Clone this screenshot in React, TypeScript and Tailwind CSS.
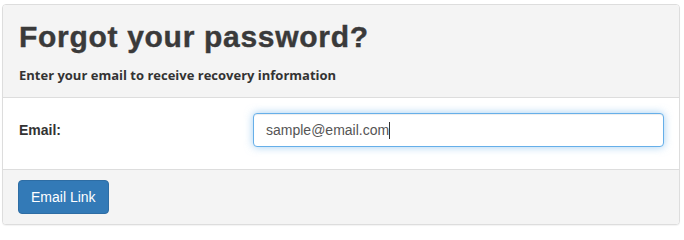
import React from "react";

export default function App() {
  return (
    <div className="w-[684px] h-[228px] bg-white pt-[4px] pl-[2px]">
      <div className="w-[678px] border border-[#dddddd] rounded-[4px] bg-white overflow-hidden shadow-[0_1px_1px_rgba(0,0,0,0.05)]">
        <div className="h-[93px] bg-[#f4f4f4] border-b border-[#dddddd] pl-[16px] pt-[15px]">
          <h1 className="font-['Liberation_Sans',Arial,sans-serif] font-bold text-[30px] leading-[33px] tracking-[0.7px] text-[#3a3a3a] m-0 [-webkit-text-stroke:0.4px_#3a3a3a]">
            Forgot your password?
          </h1>
          <p className="mt-[13px] font-['Open_Sans',sans-serif] font-bold text-[13px] leading-[18px] text-[#333333]">
            Enter your email to receive recovery information
          </p>
        </div>
        <div className="h-[72px] bg-white flex items-start pt-[15px] pl-[16px] pr-[15px] border-b border-[#dddddd]">
          <label className="w-[234px] h-[34px] flex items-center font-['Liberation_Sans',Arial,sans-serif] font-bold text-[14px] text-[#333333]">
            Email:
          </label>
          <div className="flex-1 h-[34px] rounded-[4px] border border-[#66afe9] bg-white shadow-[inset_0_1px_1px_rgba(0,0,0,0.075),0_0_8px_rgba(102,175,233,0.6)] flex items-center pl-[12px] font-['Liberation_Sans',Arial,sans-serif] text-[14px] text-[#555555]">
            <span>sample@email.com</span>
            <span className="inline-block w-[1px] h-[17px] bg-[#333333]" />
          </div>
        </div>
        <div className="h-[54px] bg-[#f4f4f4] pl-[15px] pt-[10px]">
          <button className="h-[34px] px-[12px] rounded-[4px] bg-[#337ab7] border border-[#2e6da4] text-white font-['Liberation_Sans',Arial,sans-serif] text-[14px] leading-[20px]">
            Email Link
          </button>
        </div>
      </div>
    </div>
  );
}
